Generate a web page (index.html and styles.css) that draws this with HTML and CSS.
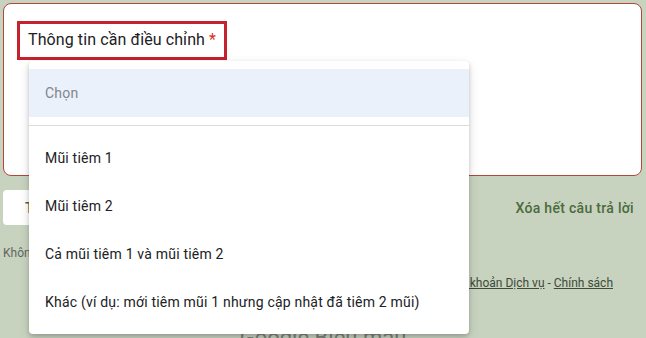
FILE: index.html
```html
<!DOCTYPE html>
<html lang="vi">
<head>
<meta charset="utf-8">
<title>Thông tin cần điều chỉnh</title>
<link rel="stylesheet" href="styles.css">
</head>
<body>
<div class="page">
  <div class="card">
    <div class="question-title">Thông tin cần điều chỉnh <span class="req">*</span></div>
  </div>
  <div class="actions">
    <button class="btn-next">Tiếp</button>
    <span class="clear">Xóa hết câu trả lời</span>
  </div>
  <p class="warning">Không bao giờ gửi mật khẩu thông qua Google Biểu mẫu.</p>
  <p class="terms">Nội dung này không phải do Google tạo ra hay xác nhận. <a href="#">Báo cáo Lạm dụng</a> - <a href="#">Điều khoản Dịch vụ</a> - <a href="#">Chính sách</a></p>
  <div class="brand">Google Biểu mẫu</div>

  <div class="menu">
    <div class="opt placeholder">Chọn</div>
    <div class="divider"></div>
    <div class="opt">Mũi tiêm 1</div>
    <div class="opt">Mũi tiêm 2</div>
    <div class="opt">Cả mũi tiêm 1 và mũi tiêm 2</div>
    <div class="opt">Khác (ví dụ: mới tiêm mũi 1 nhưng cập nhật đã tiêm 2 mũi)</div>
  </div>
</div>
</body>
</html>
```

FILE: styles.css
```css
html, body {
  margin: 0;
  padding: 0;
}
body {
  background: #c8d3bf;
  font-family: Roboto, "Noto Sans", Arial, sans-serif;
  width: 646px;
  height: 338px;
  overflow: hidden;
}
.page {
  position: relative;
  padding-top: 3px;
}
.card {
  margin: 0 4px 0 3px;
  height: 171px;
  background: #fff;
  border: 1px solid #b4463a;
  border-radius: 8px;
  padding: 0;
  box-sizing: content-box;
  display: flex;
  align-items: flex-start;
}
.question-title {
  margin: 17px 0 0 13px;
  border: 3px solid #c5212e;
  padding: 4px 8px 5px 8px;
  font-size: 16px;
  line-height: 24px;
  color: #202124;
  letter-spacing: 0.1px;
}
.req {
  color: #d93025;
}
.actions {
  display: flex;
  justify-content: space-between;
  align-items: center;
  margin-top: 14px;
  padding: 0 12px 0 3px;
}
.btn-next {
  width: 90px;
  height: 35px;
  background: #fff;
  border: none;
  border-radius: 4px;
  font-family: inherit;
  font-size: 14px;
  font-weight: 500;
  color: #4a6a3e;
  text-align: left;
  padding: 0 0 0 22px;
}
.clear {
  font-size: 14px;
  font-weight: 500;
  color: #4b6a3e;
  letter-spacing: 0.3px;
}
.warning {
  margin: 20px 0 0 3px;
  font-size: 12px;
  line-height: 16px;
  color: #5f6660;
}
.terms {
  margin: 14px 0 0 0;
  padding-right: 33px;
  text-align: right;
  font-size: 12px;
  line-height: 16px;
  color: #3e4a3a;
  white-space: nowrap;
}
.terms a {
  color: #3e4a3a;
  text-decoration: underline;
}
.brand {
  margin-top: 33px;
  text-align: center;
  font-size: 22px;
  line-height: 28px;
  color: #7d8479;
}
.menu {
  position: absolute;
  left: 29px;
  top: 61px;
  width: 440px;
  background: #fff;
  border-radius: 4px;
  padding: 8px 0;
  box-shadow: 0 2px 4px rgba(0,0,0,0.18), 0 4px 12px rgba(0,0,0,0.12);
}
.opt {
  height: 48px;
  display: flex;
  align-items: center;
  padding-left: 16px;
  font-size: 14px;
  color: #202124;
  letter-spacing: 0.2px;
}
.opt.placeholder {
  background: #ebf1fa;
  color: #80868b;
}
.divider {
  height: 1px;
  background: #dadce0;
  margin: 8px 0;
}
```
